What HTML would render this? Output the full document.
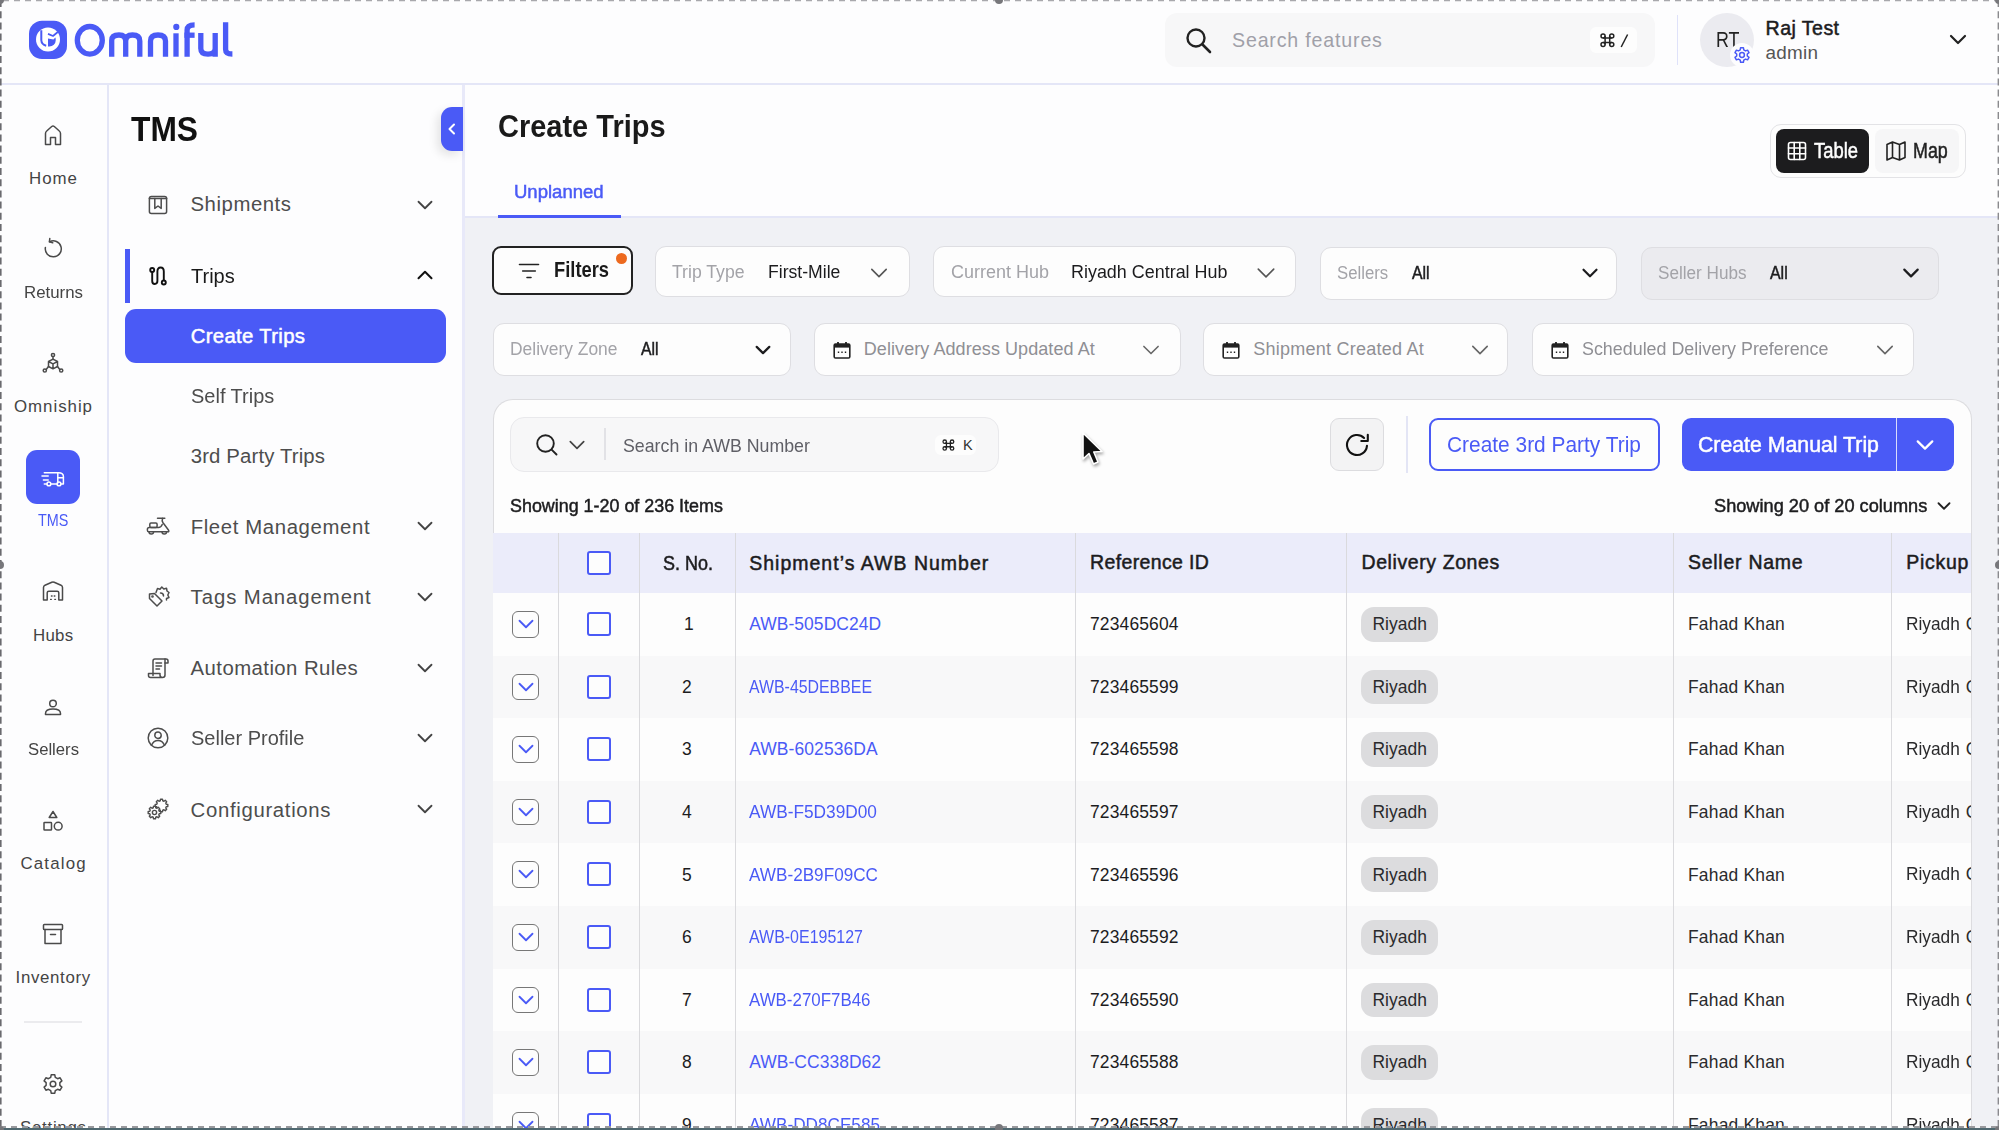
<!DOCTYPE html><html><head><meta charset="utf-8"><style>
html,body{margin:0;padding:0;width:1999px;height:1130px;overflow:hidden;background:#fdfdfe;font-family:"Liberation Sans",sans-serif}
.t{position:absolute;white-space:nowrap;line-height:1}
.r{position:absolute;box-sizing:border-box}
</style></head><body>
<div class="r" style="left:0px;top:0px;width:1999px;height:84px;background:#fdfdfe"></div>
<div class="r" style="left:0px;top:83px;width:1999px;height:2px;background:#e4e6f7"></div>
<div class="r" style="left:0px;top:85px;width:107px;height:1045px;background:#fdfdfe"></div>
<div class="r" style="left:107px;top:85px;width:2px;height:1045px;background:#e4e6f7"></div>
<div class="r" style="left:109px;top:85px;width:354px;height:1045px;background:#fdfdfe"></div>
<div class="r" style="left:462px;top:85px;width:3px;height:1045px;background:#e8e9f9"></div>
<div class="r" style="left:465px;top:85px;width:1534px;height:131px;background:#fdfdfe"></div>
<div class="r" style="left:465px;top:216px;width:1534px;height:2px;background:#e4e6f7"></div>
<div class="r" style="left:465px;top:218px;width:1534px;height:912px;background:#f0f1f5"></div>
<svg class="r" style="left:0;top:0" width="240" height="70" viewBox="0 0 240 70">
<rect x="29" y="20.7" width="38" height="38.3" rx="13" fill="#4a5af6"/>
<circle cx="48" cy="39.6" r="12" fill="#fff"/>
<path d="M41.3 30.3 V40.3 Q41.6 44.6 46.2 45.7" fill="none" stroke="#4a5af6" stroke-width="2"/>
<path d="M48 33.9 L53 36 L57.8 32" fill="none" stroke="#4a5af6" stroke-width="1.7" stroke-linejoin="round"/>
<path d="M48 38.6 L53.4 39.6 L55.4 37.4 Q55.9 38.8 55.7 40.4 A6.3 6.3 0 0 1 49.4 46.6 L48 46.5 Z" fill="#4a5af6"/>
<g fill="none" stroke="#4a5af6" stroke-width="5.3">
<ellipse cx="89.8" cy="40.3" rx="12.5" ry="13.8"/>
<path d="M111.7 56.7 V40.5 Q111.7 35 119 35 Q125.7 35 125.7 41 V56.7 M125.7 41 Q125.7 35 132.5 35 Q139.8 35 139.8 41 V56.7"/>
<path d="M150.5 56.7 V41 Q150.5 35 158 35 Q165.5 35 165.5 41 V56.7"/>
<path d="M176 33.3 V56.7"/>
<path d="M187.1 56.7 V30 Q187.1 24.8 194.6 24.8"/>
<path d="M184.4 35.2 H194.6"/>
<path d="M200.8 32.9 V48.5 Q200.8 54.2 208 54.2 Q215.2 54.2 215.2 48.5 V32.9 M215.2 48 V56.7"/>
<path d="M225.6 22.2 V49.5 Q225.6 54 232.4 54"/>
</g>
<circle cx="176.3" cy="26.9" r="3.1" fill="#4a5af6"/>
</svg>
<div class="r" style="left:1165px;top:12.6px;width:490px;height:54.800000000000004px;background:#f7f7f8;border-radius:12px"></div>
<svg class="r" style="left:1184px;top:26px;" width="30" height="28" viewBox="0 0 30 28"><circle cx="12" cy="12" r="8.5" fill="none" stroke="#222" stroke-width="2.4"/><path d="M18.5 18.5 L26 26" stroke="#222" stroke-width="2.6" stroke-linecap="round"/></svg>
<div class="t" style="left:1232.00px;top:31px;font-size:19.62px;letter-spacing:0.820px;color:#a0a0a8;font-weight:400;">Search features</div>
<div class="r" style="left:1590px;top:27px;width:47px;height:26px;background:#fdfdfd;border-radius:6px"></div>
<svg class="r" style="left:1600.5px;top:33.7px;overflow:visible" width="12.799999999999955" height="12.5" viewBox="0 0 12.799999999999955 12.5"><g fill="none" stroke="#222" stroke-width="1.5"><path d="M4.095999999999986 2.047999999999993 V10.452000000000007 M8.703999999999969 2.047999999999993 V10.452000000000007 M2.047999999999993 4.095999999999986 H10.751999999999962 M2.047999999999993 8.404000000000014 H10.751999999999962"/><circle cx="2.047999999999993" cy="2.047999999999993" r="2.047999999999993"/><circle cx="10.751999999999962" cy="2.047999999999993" r="2.047999999999993"/><circle cx="2.047999999999993" cy="10.452000000000007" r="2.047999999999993"/><circle cx="10.751999999999962" cy="10.452000000000007" r="2.047999999999993"/></g></svg>
<svg class="r" style="left:1618px;top:32px;" width="14" height="18" viewBox="0 0 14 18"><path d="M9.6 2.5 L3.2 15" stroke="#222" stroke-width="1.5" fill="none"/></svg>
<div class="r" style="left:1677px;top:15px;width:1.2999999999999545px;height:50px;background:#dfe2fa"></div>
<div class="r" style="left:1700px;top:13px;width:54px;height:54px;border-radius:50%;background:#ebebf0"></div>
<div class="t" style="left:1715.50px;top:29px;font-size:21.8px;letter-spacing:0.000px;color:#222;font-weight:400;transform:scaleX(0.8198);transform-origin:0 0;">RT</div>
<div class="r" style="left:1730px;top:43px;width:24px;height:24px;border-radius:50%;background:#fdfdfe"></div>
<svg class="r" style="left:1733px;top:46px;" width="18" height="18" viewBox="0 0 18 18"><g transform="translate(9,9)" fill="none" stroke="#4a5af6" stroke-width="1.5" stroke-linejoin="round"><circle r="2.4"/><path d="M-1.76,-5.11 L-1.41,-7.26 L1.41,-7.26 L1.76,-5.11 L3.54,-4.08 L5.58,-4.85 L7.00,-2.41 L5.30,-1.03 L5.30,1.03 L7.00,2.41 L5.58,4.85 L3.54,4.08 L1.76,5.11 L1.41,7.26 L-1.41,7.26 L-1.76,5.11 L-3.54,4.08 L-5.58,4.85 L-7.00,2.41 L-5.30,1.03 L-5.30,-1.03 L-7.00,-2.41 L-5.58,-4.85 L-3.54,-4.08 Z"/></g></svg>
<div class="t" style="left:1765.60px;top:19px;font-size:19.62px;letter-spacing:0.427px;color:#1c1c1e;font-weight:400;-webkit-text-stroke:0.5px #1c1c1e;">Raj Test</div>
<div class="t" style="left:1765.60px;top:44px;font-size:18.9px;letter-spacing:0.254px;color:#555;font-weight:400;">admin</div>
<svg class="r" style="left:1948px;top:33px;" width="20" height="14" viewBox="0 0 20 14"><path d="M3 3 L10 10 L17 3" fill="none" stroke="#222" stroke-width="2.2" stroke-linecap="round" stroke-linejoin="round"/></svg>
<svg class="r" style="left:41.0px;top:122.5px" width="24" height="24" viewBox="-12.0 -12.0 24 24"><g fill="none" stroke="#4a4a4a" stroke-width="1.5" stroke-linecap="round" stroke-linejoin="round"><path d="M-7.5 9.5 V-1.5 Q-7.5 -3 -6.3 -4 L-1.3 -8.5 Q0 -9.5 1.3 -8.5 L6.3 -4 Q7.5 -3 7.5 -1.5 V9.5 H2.5 V2.5 H-2.5 V9.5 Z"/></g></svg>
<svg class="r" style="left:41.0px;top:237.0px" width="24" height="24" viewBox="-12.0 -12.0 24 24"><g fill="none" stroke="#4a4a4a" stroke-width="1.5" stroke-linecap="round" stroke-linejoin="round"><path d="M-3.5 -7.2 A8 8 0 1 1 -7.6 -1.5"/><path d="M-3.2 -10.5 L-3.6 -7.2 L-0.3 -6.3"/></g></svg>
<svg class="r" style="left:41.0px;top:351.0px" width="24" height="24" viewBox="-12.0 -12.0 24 24"><g fill="none" stroke="#4a4a4a" stroke-width="1.5" stroke-linecap="round" stroke-linejoin="round"><circle cx="0" cy="-8" r="1.6"/><path d="M0 -6.4 V-3.6"/><path d="M-4.5 -1.5 L0 -3.8 L4.5 -1.5 V3.5 L0 5.8 L-4.5 3.5 Z M-4.5 -1.5 L0 0.8 L4.5 -1.5 M0 0.8 V5.8"/><circle cx="-8.2" cy="7.5" r="1.6"/><circle cx="8.2" cy="7.5" r="1.6"/><path d="M-4.5 3.5 L-6.8 6.5 M4.5 3.5 L6.8 6.5"/></g></svg>
<div class="r" style="left:26px;top:450px;width:54px;height:54px;background:#4a5af6;border-radius:11px"></div>
<svg class="r" style="left:40.0px;top:464.5px" width="26" height="26" viewBox="-13.0 -13.0 26 26"><g fill="none" stroke="#fff" stroke-width="1.5" stroke-linecap="round" stroke-linejoin="round"><path d="M-8.7 -5.3 H5.5 Q10.4 -5.3 10.4 -1.4 V5.9 H8 M4.1 5.9 H-2.2 M-6 5.9 H-8.7"/><path d="M4.8 -5.3 V5"/><path d="M4.8 -0.3 H10.4"/><circle cx="-4.1" cy="5.9" r="1.9"/><circle cx="6" cy="5.9" r="1.9"/><path d="M-11 -1.9 H-4.8 M-9.6 1.9 H-4.8"/></g></svg>
<svg class="r" style="left:41.0px;top:579.0px" width="24" height="24" viewBox="-12.0 -12.0 24 24"><g fill="none" stroke="#4a4a4a" stroke-width="1.5" stroke-linecap="round" stroke-linejoin="round"><path d="M-9.5 9 V-3.5 Q-9.5 -5 -8 -5.8 L-1.2 -8.8 Q0 -9.3 1.2 -8.8 L8 -5.8 Q9.5 -5 9.5 -3.5 V9 H5.8 V1.8 Q5.8 0.2 4.2 0.2 H-4.2 Q-5.8 0.2 -5.8 1.8 V9 Z"/><path d="M-1.6 5 H-0.9 M1.2 5 H1.9 M-2.4 8.4 H-1.7 M1.8 8.4 H2.5" stroke-width="1.3"/></g></svg>
<svg class="r" style="left:41.0px;top:694.5px" width="24" height="24" viewBox="-12.0 -12.0 24 24"><g fill="none" stroke="#4a4a4a" stroke-width="1.5" stroke-linecap="round" stroke-linejoin="round"><circle cx="0" cy="-3.5" r="3.3"/><path d="M-7.5 7.5 V6.5 Q-7.5 2 0 2 Q7.5 2 7.5 6.5 V7.5 Z"/></g></svg>
<svg class="r" style="left:41.0px;top:808.5px" width="24" height="24" viewBox="-12.0 -12.0 24 24"><g fill="none" stroke="#4a4a4a" stroke-width="1.5" stroke-linecap="round" stroke-linejoin="round"><path d="M0 -9.5 L3.8 -3.5 H-3.8 Z"/><rect x="-9" y="1.5" width="7.5" height="7.5" rx="0.6"/><circle cx="5.2" cy="5.2" r="3.9"/></g></svg>
<svg class="r" style="left:41.0px;top:922.0px" width="24" height="24" viewBox="-12.0 -12.0 24 24"><g fill="none" stroke="#4a4a4a" stroke-width="1.5" stroke-linecap="round" stroke-linejoin="round"><rect x="-9.5" y="-9.5" width="19" height="5" rx="0.8"/><path d="M-8 -4.5 V9.5 H8 V-4.5"/><path d="M-2.5 0.5 H2.5"/></g></svg>
<div class="r" style="left:24px;top:1021.3px;width:58px;height:1.5px;background:#ebebee"></div>
<svg class="r" style="left:41.0px;top:1072.0px" width="24" height="24" viewBox="-12.0 -12.0 24 24"><g fill="none" stroke="#4a4a4a" stroke-width="1.5" stroke-linecap="round" stroke-linejoin="round"><path d="M-2.28,-6.62 L-1.79,-9.23 L1.79,-9.23 L2.28,-6.62 L4.59,-5.28 L7.09,-6.17 L8.89,-3.06 L6.87,-1.34 L6.87,1.34 L8.89,3.06 L7.09,6.17 L4.59,5.28 L2.28,6.62 L1.79,9.23 L-1.79,9.23 L-2.28,6.62 L-4.59,5.28 L-7.09,6.17 L-8.89,3.06 L-6.87,1.34 L-6.87,-1.34 L-8.89,-3.06 L-7.09,-6.17 L-4.59,-5.28 Z"/><circle r="2.8"/></g></svg>
<div class="t" style="left:29.00px;top:171px;font-size:16.86px;letter-spacing:1.006px;color:#444;font-weight:400;">Home</div>
<div class="t" style="left:24.00px;top:285px;font-size:16.86px;letter-spacing:0.000px;color:#444;font-weight:400;transform:scaleX(0.9995);transform-origin:0 0;">Returns</div>
<div class="t" style="left:14.00px;top:399px;font-size:16.86px;letter-spacing:0.969px;color:#444;font-weight:400;">Omniship</div>
<div class="t" style="left:33.00px;top:628px;font-size:16.86px;letter-spacing:0.283px;color:#444;font-weight:400;">Hubs</div>
<div class="t" style="left:27.60px;top:742px;font-size:16.86px;letter-spacing:0.000px;color:#444;font-weight:400;transform:scaleX(0.9895);transform-origin:0 0;">Sellers</div>
<div class="t" style="left:20.40px;top:856px;font-size:16.86px;letter-spacing:1.197px;color:#444;font-weight:400;">Catalog</div>
<div class="t" style="left:15.60px;top:970px;font-size:16.86px;letter-spacing:0.657px;color:#444;font-weight:400;">Inventory</div>
<div class="t" style="left:20.00px;top:1120px;font-size:16.86px;letter-spacing:0.726px;color:#444;font-weight:400;">Settings</div>
<div class="t" style="left:37.70px;top:513px;font-size:15.7px;letter-spacing:0.000px;color:#4a5af6;font-weight:400;transform:scaleX(0.9172);transform-origin:0 0;">TMS</div>
<div class="t" style="left:131.00px;top:112px;font-size:34.88px;letter-spacing:0.000px;color:#111;font-weight:700;transform:scaleX(0.9099);transform-origin:0 0;">TMS</div>
<div class="r" style="left:441px;top:107px;width:22px;height:44px;background:#4a5af6;border-radius:11px 0 0 11px;box-shadow:-4px 4px 10px rgba(0,0,0,0.10)"></div>
<svg class="r" style="left:445px;top:120px;" width="14" height="18" viewBox="0 0 14 18"><path d="M9 4.5 L4.5 9 L9 13.5" fill="none" stroke="#fff" stroke-width="2" stroke-linecap="round" stroke-linejoin="round"/></svg>
<svg class="r" style="left:145.8px;top:193.2px" width="24" height="24" viewBox="-12.0 -12.0 24 24"><g fill="none" stroke="#4d4d4d" stroke-width="1.5" stroke-linecap="round" stroke-linejoin="round"><rect x="-8.6" y="-8.6" width="17.2" height="17.2" rx="2"/><path d="M-8.6 -6.6 H8.6"/><path d="M-3.2 -6.6 V3.4 L0 1 L3.2 3.4 V-6.6"/></g></svg>
<div class="t" style="left:190.50px;top:194px;font-size:20.35px;letter-spacing:0.543px;color:#4d4d4d;font-weight:400;">Shipments</div>
<svg class="r" style="left:412.5px;top:193px" width="24" height="24" viewBox="-12 -12 24 24"><path d="M-6.5 -3.25 L0 3.25 L6.5 -3.25" fill="none" stroke="#444" stroke-width="1.8" stroke-linecap="round" stroke-linejoin="round"/></svg>
<div class="r" style="left:125px;top:249px;width:5px;height:54px;background:#4a5af6"></div>
<svg class="r" style="left:145.8px;top:263.8px" width="24" height="24" viewBox="-12.0 -12.0 24 24"><g fill="none" stroke="#111" stroke-width="1.9" stroke-linecap="round" stroke-linejoin="round"><circle cx="-5.8" cy="-6" r="2"/><path d="M-5.8 -4 V5 Q-5.8 8 -3.2 8 Q-0.6 8 -0.6 5 V-4.5 Q-0.6 -8.5 2.6 -8.5 Q5.8 -8.5 5.8 -4.5 V4"/><circle cx="5.8" cy="6.5" r="2"/></g></svg>
<div class="t" style="left:190.70px;top:266px;font-size:20.35px;letter-spacing:0.000px;color:#1a1a1a;font-weight:400;transform:scaleX(0.9850);transform-origin:0 0;">Trips</div>
<svg class="r" style="left:412.5px;top:263px" width="24" height="24" viewBox="-12 -12 24 24"><path d="M-6.5 3.25 L0 -3.25 L6.5 3.25" fill="none" stroke="#111" stroke-width="2" stroke-linecap="round" stroke-linejoin="round"/></svg>
<div class="r" style="left:125px;top:309px;width:321px;height:53.5px;background:#4a5af6;border-radius:11px"></div>
<div class="t" style="left:190.70px;top:326px;font-size:20.35px;letter-spacing:0.316px;color:#fff;font-weight:400;-webkit-text-stroke:0.5px #fff;">Create Trips</div>
<div class="t" style="left:190.70px;top:386px;font-size:20.35px;letter-spacing:0.000px;color:#4d4d4d;font-weight:400;transform:scaleX(0.9821);transform-origin:0 0;">Self Trips</div>
<div class="t" style="left:190.70px;top:446px;font-size:20.35px;letter-spacing:0.142px;color:#4d4d4d;font-weight:400;">3rd Party Trips</div>
<svg class="r" style="left:145.5px;top:514.0px" width="24" height="24" viewBox="-12.0 -12.0 24 24"><g fill="none" stroke="#4d4d4d" stroke-width="1.5" stroke-linecap="round" stroke-linejoin="round"><path d="M-0.5 -7.7 H6.8"/><path d="M4.6 -7.6 Q3.6 -5.2 5 -3.2 Q7.6 0.2 10.6 4.2 Q11.2 5.8 10 5.8 H-9 Q-10.6 5.8 -10.6 4.2 V3.2 Q-10.6 1.5 -8.8 1.5 H0.5 Q3 1.5 4.2 -1.5"/><rect x="-8.2" y="-2.9" width="7.3" height="4.4" rx="1.2"/><path d="M-9 5.8 A2.3 2.3 0 0 0 -4.4 5.8 M4 5.8 A2.3 2.3 0 0 0 8.6 5.8"/></g></svg>
<div class="t" style="left:190.70px;top:517px;font-size:20.35px;letter-spacing:0.615px;color:#4d4d4d;font-weight:400;">Fleet Management</div>
<svg class="r" style="left:412.5px;top:514px" width="24" height="24" viewBox="-12 -12 24 24"><path d="M-6.5 -3.25 L0 3.25 L6.5 -3.25" fill="none" stroke="#444" stroke-width="1.8" stroke-linecap="round" stroke-linejoin="round"/></svg>
<svg class="r" style="left:145.5px;top:584.8px" width="24" height="24" viewBox="-12.0 -12.0 24 24"><g fill="none" stroke="#4d4d4d" stroke-width="1.5" stroke-linecap="round" stroke-linejoin="round"><path d="M-8.5 -3 L-3.5 -3.5 L4 4 L-1 9 L-8.5 1.5 Z"/><circle cx="-5.5" cy="-0.5" r="0.6"/><path d="M-2 -4.5 L-0.5 -8.5 L2 -7.8 L3.8 -10 L5.8 -8 L8.5 -8.8 L9 -6 L11 -4.5 L9.8 -2 L11 0.5 L8.5 1.5 L8.5 3"/><path d="M2.5 -4 A3 3 0 0 1 5.5 -1"/></g></svg>
<div class="t" style="left:190.60px;top:587px;font-size:20.35px;letter-spacing:0.913px;color:#4d4d4d;font-weight:400;">Tags Management</div>
<svg class="r" style="left:412.5px;top:584.8px" width="24" height="24" viewBox="-12 -12 24 24"><path d="M-6.5 -3.25 L0 3.25 L6.5 -3.25" fill="none" stroke="#444" stroke-width="1.8" stroke-linecap="round" stroke-linejoin="round"/></svg>
<svg class="r" style="left:145.5px;top:655.5px" width="24" height="24" viewBox="-12.0 -12.0 24 24"><g fill="none" stroke="#4d4d4d" stroke-width="1.5" stroke-linecap="round" stroke-linejoin="round"><path d="M-5 7.5 V-7 Q-5 -9 -3 -9 H8 Q10 -9 10 -7 V-5 H7"/><path d="M7 -9 V7 Q7 9.5 4.5 9.5 H-7.5 Q-9.5 9.5 -9.5 7.5 V5.5 H2 V7 Q2 9.5 4.5 9.5"/><path d="M-2 -5 H3.5 M-2 -2 H3.5 M-2 1 H1.5"/></g></svg>
<div class="t" style="left:190.60px;top:658px;font-size:20.35px;letter-spacing:0.432px;color:#4d4d4d;font-weight:400;">Automation Rules</div>
<svg class="r" style="left:412.5px;top:655.5px" width="24" height="24" viewBox="-12 -12 24 24"><path d="M-6.5 -3.25 L0 3.25 L6.5 -3.25" fill="none" stroke="#444" stroke-width="1.8" stroke-linecap="round" stroke-linejoin="round"/></svg>
<svg class="r" style="left:145.7px;top:726.3px" width="24" height="24" viewBox="-12.0 -12.0 24 24"><g fill="none" stroke="#4d4d4d" stroke-width="1.5" stroke-linecap="round" stroke-linejoin="round"><circle r="9.8"/><circle cx="0" cy="-2.8" r="3.2"/><path d="M-6.5 7.2 Q-4.5 2.5 0 2.5 Q4.5 2.5 6.5 7.2"/></g></svg>
<div class="t" style="left:190.60px;top:728px;font-size:20.35px;letter-spacing:0.000px;color:#4d4d4d;font-weight:400;transform:scaleX(0.9830);transform-origin:0 0;">Seller Profile</div>
<svg class="r" style="left:412.5px;top:726.3px" width="24" height="24" viewBox="-12 -12 24 24"><path d="M-6.5 -3.25 L0 3.25 L6.5 -3.25" fill="none" stroke="#444" stroke-width="1.8" stroke-linecap="round" stroke-linejoin="round"/></svg>
<svg class="r" style="left:145.7px;top:797.3px" width="24" height="24" viewBox="-12.0 -12.0 24 24"><g fill="none" stroke="#4d4d4d" stroke-width="1.4" stroke-linecap="round" stroke-linejoin="round"><g transform="translate(3.5,-3.5)"><path d="M-1.27,-4.73 L-1.00,-6.32 L1.00,-6.32 L1.27,-4.73 L2.45,-4.24 L3.76,-5.18 L5.18,-3.76 L4.24,-2.45 L4.73,-1.27 L6.32,-1.00 L6.32,1.00 L4.73,1.27 L4.24,2.45 L5.18,3.76 L3.76,5.18 L2.45,4.24 L1.27,4.73 L1.00,6.32 L-1.00,6.32 L-1.27,4.73 L-2.45,4.24 L-3.76,5.18 L-5.18,3.76 L-4.24,2.45 L-4.73,1.27 L-6.32,1.00 L-6.32,-1.00 L-4.73,-1.27 L-4.24,-2.45 L-5.18,-3.76 L-3.76,-5.18 L-2.45,-4.24 Z"/></g><g transform="translate(-3.5,3.5)"><path d="M-1.27,-4.73 L-1.00,-6.32 L1.00,-6.32 L1.27,-4.73 L2.45,-4.24 L3.76,-5.18 L5.18,-3.76 L4.24,-2.45 L4.73,-1.27 L6.32,-1.00 L6.32,1.00 L4.73,1.27 L4.24,2.45 L5.18,3.76 L3.76,5.18 L2.45,4.24 L1.27,4.73 L1.00,6.32 L-1.00,6.32 L-1.27,4.73 L-2.45,4.24 L-3.76,5.18 L-5.18,3.76 L-4.24,2.45 L-4.73,1.27 L-6.32,1.00 L-6.32,-1.00 L-4.73,-1.27 L-4.24,-2.45 L-5.18,-3.76 L-3.76,-5.18 L-2.45,-4.24 Z" fill="#fdfdfe"/><circle r="2.1"/></g></g></svg>
<div class="t" style="left:190.60px;top:800px;font-size:20.35px;letter-spacing:0.668px;color:#4d4d4d;font-weight:400;">Configurations</div>
<svg class="r" style="left:412.5px;top:797px" width="24" height="24" viewBox="-12 -12 24 24"><path d="M-6.5 -3.25 L0 3.25 L6.5 -3.25" fill="none" stroke="#444" stroke-width="1.8" stroke-linecap="round" stroke-linejoin="round"/></svg>
<div class="t" style="left:498.00px;top:111px;font-size:30.52px;letter-spacing:0.000px;color:#1a1a1a;font-weight:700;transform:scaleX(0.9501);transform-origin:0 0;">Create Trips</div>
<div class="t" style="left:514.40px;top:183px;font-size:18.9px;letter-spacing:0.000px;color:#4a5af6;font-weight:400;transform:scaleX(0.9801);transform-origin:0 0;-webkit-text-stroke:0.5px #4a5af6;">Unplanned</div>
<div class="r" style="left:497.6px;top:214.6px;width:123.0px;height:3.200000000000017px;background:#4a5af6"></div>
<div class="r" style="left:1769.5px;top:124px;width:196.0px;height:53.5px;background:#fdfdfd;border:1px solid #e3e3e6;border-radius:11px"></div>
<div class="r" style="left:1775.5px;top:129.2px;width:93.20000000000005px;height:43.5px;background:#1c1c1e;border-radius:8px"></div>
<div class="r" style="left:1874.7px;top:129.2px;width:84.70000000000005px;height:43.5px;background:#f6f6f7;border-radius:8px"></div>
<svg class="r" style="left:1785.0px;top:139.0px" width="24" height="24" viewBox="-12.0 -12.0 24 24"><g fill="none" stroke="#fff" stroke-width="1.6" stroke-linecap="round" stroke-linejoin="round"><rect x="-8.5" y="-8.5" width="17" height="17" rx="2"/><path d="M-8.5 -3 H8.5 M-8.5 2.7 H8.5 M-2.8 -8.5 V8.5 M2.8 -8.5 V8.5"/></g></svg>
<div class="t" style="left:1813.50px;top:141px;font-size:21.51px;letter-spacing:0.000px;color:#fff;font-weight:400;transform:scaleX(0.8555);transform-origin:0 0;-webkit-text-stroke:0.5px #fff;">Table</div>
<svg class="r" style="left:1884.0px;top:139.0px" width="24" height="24" viewBox="-12.0 -12.0 24 24"><g fill="none" stroke="#222" stroke-width="1.6" stroke-linecap="round" stroke-linejoin="round"><path d="M-9 -6.5 L-3.5 -9 L3.5 -6.5 L9 -9 V6.5 L3.5 9 L-3.5 6.5 L-9 9 Z M-3.5 -9 V6.5 M3.5 -6.5 V9"/></g></svg>
<div class="t" style="left:1913.40px;top:141px;font-size:21.51px;letter-spacing:0.000px;color:#222;font-weight:400;transform:scaleX(0.8318);transform-origin:0 0;-webkit-text-stroke:0.5px #222;">Map</div>
<div class="r" style="left:492.4px;top:246px;width:140.20000000000005px;height:48.60000000000002px;background:#fdfdfd;border:2px solid #222;border-radius:9px"></div>
<svg class="r" style="left:517.0px;top:258.5px" width="24" height="24" viewBox="-12.0 -12.0 24 24"><g fill="none" stroke="#222" stroke-width="1.6" stroke-linecap="round" stroke-linejoin="round"><path d="M-9.5 -6.5 H9.5 M-6.3 0 H6.3 M-2 6.5 H2"/></g></svg>
<div class="t" style="left:554.00px;top:259px;font-size:21.22px;letter-spacing:0.000px;color:#1a1a1a;font-weight:700;transform:scaleX(0.8637);transform-origin:0 0;">Filters</div>
<div class="r" style="left:615.5px;top:253px;width:11px;height:11px;border-radius:50%;background:#ed6a1f"></div>
<div class="r" style="left:655px;top:246.4px;width:254.5px;height:50.79999999999998px;background:#fdfdfd;border:1.3px solid #dedee2;border-radius:11px"></div>
<div class="t" style="left:672.40px;top:263px;font-size:18.02px;letter-spacing:0.000px;color:#a3a3a8;font-weight:400;transform:scaleX(0.9795);transform-origin:0 0;">Trip Type</div>
<div class="t" style="left:767.60px;top:263px;font-size:18.02px;letter-spacing:0.000px;color:#1c1c1e;font-weight:400;transform:scaleX(0.9776);transform-origin:0 0;">First-Mile</div>
<svg class="r" style="left:867.2px;top:260.5px" width="24" height="24" viewBox="-12 -12 24 24"><path d="M-7.2 -3.6 L0 3.6 L7.2 -3.6" fill="none" stroke="#555" stroke-width="1.6" stroke-linecap="round" stroke-linejoin="round"/></svg>
<div class="r" style="left:932.7px;top:246.3px;width:363.79999999999995px;height:50.89999999999998px;background:#fdfdfd;border:1.3px solid #dedee2;border-radius:11px"></div>
<div class="t" style="left:950.50px;top:263px;font-size:18.02px;letter-spacing:0.000px;color:#a3a3a8;font-weight:400;transform:scaleX(0.9984);transform-origin:0 0;">Current Hub</div>
<div class="t" style="left:1070.80px;top:263px;font-size:18.02px;letter-spacing:0.000px;color:#1c1c1e;font-weight:400;transform:scaleX(0.9952);transform-origin:0 0;">Riyadh Central Hub</div>
<svg class="r" style="left:1253.7px;top:260.5px" width="24" height="24" viewBox="-12 -12 24 24"><path d="M-7.7 -3.85 L0 3.85 L7.7 -3.85" fill="none" stroke="#555" stroke-width="1.6" stroke-linecap="round" stroke-linejoin="round"/></svg>
<div class="r" style="left:1319.6px;top:246.8px;width:297.8000000000002px;height:53.19999999999999px;background:#fdfdfd;border:1.3px solid #dedee2;border-radius:11px"></div>
<div class="t" style="left:1337.20px;top:264px;font-size:18.02px;letter-spacing:0.000px;color:#a3a3a8;font-weight:400;transform:scaleX(0.9294);transform-origin:0 0;">Sellers</div>
<div class="t" style="left:1411.80px;top:264px;font-size:18.02px;letter-spacing:0.000px;color:#1c1c1e;font-weight:400;transform:scaleX(0.8791);transform-origin:0 0;-webkit-text-stroke:0.5px #1c1c1e;">All</div>
<svg class="r" style="left:1577.5px;top:261.3px" width="24" height="24" viewBox="-12 -12 24 24"><path d="M-6.5 -3.25 L0 3.25 L6.5 -3.25" fill="none" stroke="#1c1c1e" stroke-width="2.2" stroke-linecap="round" stroke-linejoin="round"/></svg>
<div class="r" style="left:1640.8px;top:246.8px;width:297.79999999999995px;height:53.19999999999999px;background:#ebebef;border:1.3px solid #dedee2;border-radius:11px"></div>
<div class="t" style="left:1658.40px;top:264px;font-size:18.02px;letter-spacing:0.000px;color:#a3a3a8;font-weight:400;transform:scaleX(0.9512);transform-origin:0 0;">Seller Hubs</div>
<div class="t" style="left:1770.00px;top:264px;font-size:18.02px;letter-spacing:0.000px;color:#1c1c1e;font-weight:400;transform:scaleX(0.8841);transform-origin:0 0;-webkit-text-stroke:0.5px #1c1c1e;">All</div>
<svg class="r" style="left:1898.7px;top:261.3px" width="24" height="24" viewBox="-12 -12 24 24"><path d="M-6.7 -3.35 L0 3.35 L6.7 -3.35" fill="none" stroke="#1c1c1e" stroke-width="2.2" stroke-linecap="round" stroke-linejoin="round"/></svg>
<div class="r" style="left:492.6px;top:322.6px;width:298.0px;height:53.69999999999999px;background:#fdfdfd;border:1.3px solid #dedee2;border-radius:11px"></div>
<div class="t" style="left:510.30px;top:340px;font-size:18.02px;letter-spacing:0.000px;color:#a3a3a8;font-weight:400;transform:scaleX(0.9670);transform-origin:0 0;">Delivery Zone</div>
<div class="t" style="left:640.80px;top:340px;font-size:18.02px;letter-spacing:0.000px;color:#1c1c1e;font-weight:400;transform:scaleX(0.8741);transform-origin:0 0;-webkit-text-stroke:0.5px #1c1c1e;">All</div>
<svg class="r" style="left:750.7px;top:337.6px" width="24" height="24" viewBox="-12 -12 24 24"><path d="M-6.3 -3.15 L0 3.15 L6.3 -3.15" fill="none" stroke="#1c1c1e" stroke-width="2.2" stroke-linecap="round" stroke-linejoin="round"/></svg>
<div class="r" style="left:813.5px;top:323.2px;width:367.0px;height:52.80000000000001px;background:#fdfdfd;border:1.3px solid #dedee2;border-radius:11px"></div>
<svg class="r" style="left:832.5px;top:340.5px" width="18" height="18" viewBox="0 0 18 18"><rect x="1.2" y="3" width="15.6" height="14" rx="1.3" fill="none" stroke="#222" stroke-width="1.6"/><rect x="1.2" y="3" width="15.6" height="3.6" fill="#222"/><path d="M5 1 V3.5 M13 1 V3.5" stroke="#222" stroke-width="1.8"/><path d="M4.8 11.2 H6.2 M8.3 11.2 H9.7 M11.8 11.2 H13.2" stroke="#222" stroke-width="1.4"/></svg>
<div class="t" style="left:863.80px;top:340px;font-size:18.02px;letter-spacing:0.062px;color:#8f8f94;font-weight:400;">Delivery Address Updated At</div>
<svg class="r" style="left:1139px;top:338.4px" width="24" height="24" viewBox="-12 -12 24 24"><path d="M-7.1 -3.55 L0 3.55 L7.1 -3.55" fill="none" stroke="#666" stroke-width="1.6" stroke-linecap="round" stroke-linejoin="round"/></svg>
<div class="r" style="left:1203.3px;top:323px;width:305.20000000000005px;height:52.89999999999998px;background:#fdfdfd;border:1.3px solid #dedee2;border-radius:11px"></div>
<svg class="r" style="left:1222px;top:340.5px" width="18" height="18" viewBox="0 0 18 18"><rect x="1.2" y="3" width="15.6" height="14" rx="1.3" fill="none" stroke="#222" stroke-width="1.6"/><rect x="1.2" y="3" width="15.6" height="3.6" fill="#222"/><path d="M5 1 V3.5 M13 1 V3.5" stroke="#222" stroke-width="1.8"/><path d="M4.8 11.2 H6.2 M8.3 11.2 H9.7 M11.8 11.2 H13.2" stroke="#222" stroke-width="1.4"/></svg>
<div class="t" style="left:1253.20px;top:340px;font-size:18.02px;letter-spacing:0.240px;color:#8f8f94;font-weight:400;">Shipment Created At</div>
<svg class="r" style="left:1467.8px;top:338.4px" width="24" height="24" viewBox="-12 -12 24 24"><path d="M-7.2 -3.6 L0 3.6 L7.2 -3.6" fill="none" stroke="#666" stroke-width="1.6" stroke-linecap="round" stroke-linejoin="round"/></svg>
<div class="r" style="left:1531.6px;top:323px;width:382.60000000000014px;height:52.89999999999998px;background:#fdfdfd;border:1.3px solid #dedee2;border-radius:11px"></div>
<svg class="r" style="left:1551px;top:340.5px" width="18" height="18" viewBox="0 0 18 18"><rect x="1.2" y="3" width="15.6" height="14" rx="1.3" fill="none" stroke="#222" stroke-width="1.6"/><rect x="1.2" y="3" width="15.6" height="3.6" fill="#222"/><path d="M5 1 V3.5 M13 1 V3.5" stroke="#222" stroke-width="1.8"/><path d="M4.8 11.2 H6.2 M8.3 11.2 H9.7 M11.8 11.2 H13.2" stroke="#222" stroke-width="1.4"/></svg>
<div class="t" style="left:1582.20px;top:340px;font-size:18.02px;letter-spacing:0.000px;color:#8f8f94;font-weight:400;transform:scaleX(0.9923);transform-origin:0 0;">Scheduled Delivery Preference</div>
<svg class="r" style="left:1872.9px;top:338.4px" width="24" height="24" viewBox="-12 -12 24 24"><path d="M-7.2 -3.6 L0 3.6 L7.2 -3.6" fill="none" stroke="#666" stroke-width="1.6" stroke-linecap="round" stroke-linejoin="round"/></svg>
<div class="r" style="left:492.6px;top:398.8px;width:1479.0px;height:736.2px;background:#fdfdfd;border-radius:20px 20px 0 0;border:1.5px solid #dcdcdf;border-bottom:none"></div>
<div class="r" style="left:510.4px;top:416.6px;width:488.6px;height:55.89999999999998px;background:#f7f7f8;border:1px solid #e9e9ec;border-radius:14px"></div>
<svg class="r" style="left:533.8px;top:432.0px" width="26" height="26" viewBox="-13.0 -13.0 26 26"><g fill="none" stroke="#222" stroke-width="1.9" stroke-linecap="round" stroke-linejoin="round"><circle cx="-1.5" cy="-1.5" r="8.3"/><path d="M4.6 4.6 L9.5 9.5"/></g></svg>
<svg class="r" style="left:564.7px;top:432.8px" width="24" height="24" viewBox="-12 -12 24 24"><path d="M-6.7 -3.35 L0 3.35 L6.7 -3.35" fill="none" stroke="#444" stroke-width="1.7" stroke-linecap="round" stroke-linejoin="round"/></svg>
<div class="r" style="left:604px;top:428px;width:2px;height:32.30000000000001px;background:#e2e2e6"></div>
<div class="t" style="left:623.00px;top:437px;font-size:18.31px;letter-spacing:0.000px;color:#5f5f66;font-weight:400;transform:scaleX(0.9705);transform-origin:0 0;">Search in AWB Number</div>
<div class="r" style="left:935.4px;top:434.6px;width:40.200000000000045px;height:20.19999999999999px;background:#fdfdfd;border-radius:6px"></div>
<svg class="r" style="left:943.4px;top:439.8px;overflow:visible" width="10.800000000000068" height="10.199999999999989" viewBox="0 0 10.800000000000068 10.199999999999989"><g fill="none" stroke="#222" stroke-width="1.3"><path d="M3.4560000000000217 1.7280000000000109 V8.471999999999978 M7.3440000000000465 1.7280000000000109 V8.471999999999978 M1.7280000000000109 3.4560000000000217 H9.072000000000058 M1.7280000000000109 6.743999999999967 H9.072000000000058"/><circle cx="1.7280000000000109" cy="1.7280000000000109" r="1.7280000000000109"/><circle cx="9.072000000000058" cy="1.7280000000000109" r="1.7280000000000109"/><circle cx="1.7280000000000109" cy="8.471999999999978" r="1.7280000000000109"/><circle cx="9.072000000000058" cy="8.471999999999978" r="1.7280000000000109"/></g></svg>
<div class="t" style="left:963.00px;top:438px;font-size:14.53px;letter-spacing:0.000px;color:#333;font-weight:400;">K</div>
<svg class="r" style="left:1078px;top:428px" width="34" height="46" viewBox="0 0 34 46"><path d="M5 5 L5 31 L11 25.5 L15.5 36 L20 34 L15.8 24 L24 23.5 Z" fill="#111" stroke="#fff" stroke-width="1.6" stroke-linejoin="round" style="filter:drop-shadow(1px 2px 1.5px rgba(0,0,0,.35))"/></svg>
<div class="r" style="left:1330px;top:417.7px;width:54px;height:53.69999999999999px;background:#f3f3f4;border:1px solid #dcdcdf;border-radius:9px"></div>
<svg class="r" style="left:1343.0px;top:430.5px" width="28" height="28" viewBox="-14.0 -14.0 28 28"><g fill="none" stroke="#111" stroke-width="2.1" stroke-linecap="round" stroke-linejoin="round"><path d="M9.96 0.87 A10 10 0 1 1 7.07 -7.07"/><path d="M10.8 -10.3 V-4 H4.3"/></g></svg>
<div class="r" style="left:1406px;top:416px;width:2px;height:57px;background:#e3e5f5"></div>
<div class="r" style="left:1429px;top:417.7px;width:230.5px;height:53.69999999999999px;background:#fdfdfd;border:2px solid #4a5af6;border-radius:9px"></div>
<div class="t" style="left:1447.00px;top:434px;font-size:22.24px;letter-spacing:0.000px;color:#4a5af6;font-weight:400;transform:scaleX(0.9399);transform-origin:0 0;">Create 3rd Party Trip</div>
<div class="r" style="left:1681.6px;top:417.7px;width:272.10000000000014px;height:53.69999999999999px;background:#4a5af6;border-radius:9px"></div>
<div class="r" style="left:1895.5px;top:417.7px;width:1.5px;height:53.69999999999999px;background:#d9dcfb"></div>
<div class="t" style="left:1698.00px;top:434px;font-size:22.24px;letter-spacing:0.000px;color:#fff;font-weight:400;transform:scaleX(0.9570);transform-origin:0 0;-webkit-text-stroke:0.5px #fff;">Create Manual Trip</div>
<svg class="r" style="left:1913.3px;top:433px" width="24" height="24" viewBox="-12 -12 24 24"><path d="M-7.3 -3.65 L0 3.65 L7.3 -3.65" fill="none" stroke="#fff" stroke-width="2.2" stroke-linecap="round" stroke-linejoin="round"/></svg>
<div class="t" style="left:510.40px;top:496px;font-size:19.19px;letter-spacing:0.000px;color:#1c1c1e;font-weight:400;transform:scaleX(0.9326);transform-origin:0 0;-webkit-text-stroke:0.5px #1c1c1e;">Showing 1-20 of 236 Items</div>
<div class="t" style="left:1714.30px;top:496px;font-size:19.19px;letter-spacing:0.000px;color:#1c1c1e;font-weight:400;transform:scaleX(0.9476);transform-origin:0 0;-webkit-text-stroke:0.5px #1c1c1e;">Showing 20 of 20 columns</div>
<svg class="r" style="left:1932.2px;top:493.8px" width="24" height="24" viewBox="-12 -12 24 24"><path d="M-5.5 -2.75 L0 2.75 L5.5 -2.75" fill="none" stroke="#222" stroke-width="1.8" stroke-linecap="round" stroke-linejoin="round"/></svg>
<div class="r" style="left:493px;top:533px;width:1478px;height:597px;overflow:hidden">
<div class="r" style="left:0px;top:0px;width:1478px;height:60px;background:#ebecfa"></div>
<div class="r" style="left:0px;top:60.0px;width:1478px;height:62.60000000000002px;background:#fdfdfd"></div>
<div class="r" style="left:0px;top:122.60000000000002px;width:1478px;height:62.60000000000002px;background:#f8f8f9"></div>
<div class="r" style="left:0px;top:185.20000000000005px;width:1478px;height:62.60000000000002px;background:#fdfdfd"></div>
<div class="r" style="left:0px;top:247.79999999999995px;width:1478px;height:62.60000000000002px;background:#f8f8f9"></div>
<div class="r" style="left:0px;top:310.4px;width:1478px;height:62.60000000000002px;background:#fdfdfd"></div>
<div class="r" style="left:0px;top:373.0px;width:1478px;height:62.60000000000002px;background:#f8f8f9"></div>
<div class="r" style="left:0px;top:435.6px;width:1478px;height:62.60000000000002px;background:#fdfdfd"></div>
<div class="r" style="left:0px;top:498.20000000000005px;width:1478px;height:62.59999999999991px;background:#f8f8f9"></div>
<div class="r" style="left:0px;top:560.8px;width:1478px;height:62.59999999999991px;background:#fdfdfd"></div>
<div class="r" style="left:64.5px;top:0px;width:1.2999999999999545px;height:597px;background:#dadadd"></div>
<div class="r" style="left:146px;top:0px;width:1.2999999999999545px;height:597px;background:#dadadd"></div>
<div class="r" style="left:241.5px;top:0px;width:1.2999999999999545px;height:597px;background:#dadadd"></div>
<div class="r" style="left:581.5px;top:0px;width:1.2999999999999545px;height:597px;background:#dadadd"></div>
<div class="r" style="left:853.2px;top:0px;width:1.2999999999999545px;height:597px;background:#dadadd"></div>
<div class="r" style="left:1180px;top:0px;width:1.2999999999999545px;height:597px;background:#dadadd"></div>
<div class="r" style="left:1397.5px;top:0px;width:1.2999999999999545px;height:597px;background:#dadadd"></div>
</div>
<div class="r" style="left:587px;top:551px;width:24px;height:24px;border:2.6px solid #4a5af6;border-radius:3px;background:#fdfdfd"></div>
<div class="t" style="left:662.60px;top:554px;font-size:19.48px;letter-spacing:0.000px;color:#1c1c1e;font-weight:400;transform:scaleX(0.9236);transform-origin:0 0;-webkit-text-stroke:0.5px #1c1c1e;">S. No.</div>
<div class="t" style="left:749.20px;top:554px;font-size:19.48px;letter-spacing:1.025px;color:#1c1c1e;font-weight:400;-webkit-text-stroke:0.5px #1c1c1e;">Shipment’s AWB Number</div>
<div class="t" style="left:1090.00px;top:553px;font-size:19.48px;letter-spacing:0.384px;color:#1c1c1e;font-weight:400;-webkit-text-stroke:0.5px #1c1c1e;">Reference ID</div>
<div class="t" style="left:1361.50px;top:553px;font-size:19.48px;letter-spacing:0.607px;color:#1c1c1e;font-weight:400;-webkit-text-stroke:0.5px #1c1c1e;">Delivery Zones</div>
<div class="t" style="left:1688.00px;top:553px;font-size:19.48px;letter-spacing:0.742px;color:#1c1c1e;font-weight:400;-webkit-text-stroke:0.5px #1c1c1e;">Seller Name</div>
<div class="r" style="left:1880px;top:540px;width:91px;height:50px;overflow:hidden">
<div class="t" style="left:26.20px;top:13px;font-size:19.48px;letter-spacing:0.748px;color:#1c1c1e;font-weight:400;-webkit-text-stroke:0.5px #1c1c1e;">Pickup</div>
</div>
<div class="r" style="left:512px;top:611.0px;width:27px;height:26.5px;border:1.4px solid #777;border-radius:6px;background:#fdfdfd"></div>
<svg class="r" style="left:513.5px;top:612.0px" width="24" height="24" viewBox="-12 -12 24 24"><path d="M-6.5 -3.25 L0 3.25 L6.5 -3.25" fill="none" stroke="#4a5af6" stroke-width="1.8" stroke-linecap="round" stroke-linejoin="round"/></svg>
<div class="r" style="left:587px;top:612.0px;width:24px;height:24.0px;border:2.6px solid #4a5af6;border-radius:3px;background:#fdfdfd"></div>
<div class="t" style="left:684.00px;top:616px;font-size:17.44px;letter-spacing:0.000px;color:#1c1c1e;font-weight:400;">1</div>
<div class="t" style="left:749.20px;top:616px;font-size:17.44px;letter-spacing:0.067px;color:#4a5af6;font-weight:400;">AWB-505DC24D</div>
<div class="t" style="left:1090.00px;top:616px;font-size:17.44px;letter-spacing:0.152px;color:#1c1c1e;font-weight:400;">723465604</div>
<div class="r" style="left:1361px;top:607.0px;width:77.40000000000009px;height:34.60000000000002px;background:#dcdcde;border-radius:13px"></div>
<div class="t" style="left:1372.40px;top:616px;font-size:17.44px;letter-spacing:0.062px;color:#2a2a2c;font-weight:400;">Riyadh</div>
<div class="t" style="left:1688.00px;top:616px;font-size:17.44px;letter-spacing:0.197px;color:#2a2a2c;font-weight:400;">Fahad Khan</div>
<div class="r" style="left:1880px;top:599.0px;width:91px;height:50px;overflow:hidden">
<div class="t" style="left:26.20px;top:17px;font-size:17.44px;letter-spacing:0.000px;color:#2a2a2c;font-weight:400;transform:scaleX(0.9910);transform-origin:0 0;">Riyadh</div>
<div class="t" style="left:85.70px;top:17px;font-size:17.44px;letter-spacing:0.000px;color:#2a2a2c;font-weight:400;">C</div>
</div>
<div class="r" style="left:512px;top:673.6px;width:27px;height:26.5px;border:1.4px solid #777;border-radius:6px;background:#fdfdfd"></div>
<svg class="r" style="left:513.5px;top:674.6px" width="24" height="24" viewBox="-12 -12 24 24"><path d="M-6.5 -3.25 L0 3.25 L6.5 -3.25" fill="none" stroke="#4a5af6" stroke-width="1.8" stroke-linecap="round" stroke-linejoin="round"/></svg>
<div class="r" style="left:587px;top:674.6px;width:24px;height:24.0px;border:2.6px solid #4a5af6;border-radius:3px;background:#fdfdfd"></div>
<div class="t" style="left:682.00px;top:679px;font-size:17.44px;letter-spacing:0.000px;color:#1c1c1e;font-weight:400;">2</div>
<div class="t" style="left:749.20px;top:679px;font-size:17.44px;letter-spacing:0.000px;color:#4a5af6;font-weight:400;transform:scaleX(0.9109);transform-origin:0 0;">AWB-45DEBBEE</div>
<div class="t" style="left:1090.00px;top:679px;font-size:17.44px;letter-spacing:0.152px;color:#1c1c1e;font-weight:400;">723465599</div>
<div class="r" style="left:1361px;top:669.6px;width:77.40000000000009px;height:34.60000000000002px;background:#dcdcde;border-radius:13px"></div>
<div class="t" style="left:1372.40px;top:679px;font-size:17.44px;letter-spacing:0.062px;color:#2a2a2c;font-weight:400;">Riyadh</div>
<div class="t" style="left:1688.00px;top:679px;font-size:17.44px;letter-spacing:0.197px;color:#2a2a2c;font-weight:400;">Fahad Khan</div>
<div class="r" style="left:1880px;top:661.6px;width:91px;height:50px;overflow:hidden">
<div class="t" style="left:26.20px;top:17px;font-size:17.44px;letter-spacing:0.000px;color:#2a2a2c;font-weight:400;transform:scaleX(0.9910);transform-origin:0 0;">Riyadh</div>
<div class="t" style="left:85.70px;top:17px;font-size:17.44px;letter-spacing:0.000px;color:#2a2a2c;font-weight:400;">C</div>
</div>
<div class="r" style="left:512px;top:736.2px;width:27px;height:26.5px;border:1.4px solid #777;border-radius:6px;background:#fdfdfd"></div>
<svg class="r" style="left:513.5px;top:737.2px" width="24" height="24" viewBox="-12 -12 24 24"><path d="M-6.5 -3.25 L0 3.25 L6.5 -3.25" fill="none" stroke="#4a5af6" stroke-width="1.8" stroke-linecap="round" stroke-linejoin="round"/></svg>
<div class="r" style="left:587px;top:737.2px;width:24px;height:24.0px;border:2.6px solid #4a5af6;border-radius:3px;background:#fdfdfd"></div>
<div class="t" style="left:682.00px;top:741px;font-size:17.44px;letter-spacing:0.000px;color:#1c1c1e;font-weight:400;">3</div>
<div class="t" style="left:749.20px;top:741px;font-size:17.44px;letter-spacing:0.108px;color:#4a5af6;font-weight:400;">AWB-602536DA</div>
<div class="t" style="left:1090.00px;top:741px;font-size:17.44px;letter-spacing:0.152px;color:#1c1c1e;font-weight:400;">723465598</div>
<div class="r" style="left:1361px;top:732.2px;width:77.40000000000009px;height:34.60000000000002px;background:#dcdcde;border-radius:13px"></div>
<div class="t" style="left:1372.40px;top:741px;font-size:17.44px;letter-spacing:0.062px;color:#2a2a2c;font-weight:400;">Riyadh</div>
<div class="t" style="left:1688.00px;top:741px;font-size:17.44px;letter-spacing:0.197px;color:#2a2a2c;font-weight:400;">Fahad Khan</div>
<div class="r" style="left:1880px;top:724.2px;width:91px;height:50px;overflow:hidden">
<div class="t" style="left:26.20px;top:17px;font-size:17.44px;letter-spacing:0.000px;color:#2a2a2c;font-weight:400;transform:scaleX(0.9910);transform-origin:0 0;">Riyadh</div>
<div class="t" style="left:85.70px;top:17px;font-size:17.44px;letter-spacing:0.000px;color:#2a2a2c;font-weight:400;">C</div>
</div>
<div class="r" style="left:512px;top:798.8px;width:27px;height:26.5px;border:1.4px solid #777;border-radius:6px;background:#fdfdfd"></div>
<svg class="r" style="left:513.5px;top:799.8px" width="24" height="24" viewBox="-12 -12 24 24"><path d="M-6.5 -3.25 L0 3.25 L6.5 -3.25" fill="none" stroke="#4a5af6" stroke-width="1.8" stroke-linecap="round" stroke-linejoin="round"/></svg>
<div class="r" style="left:587px;top:799.8px;width:24px;height:24.0px;border:2.6px solid #4a5af6;border-radius:3px;background:#fdfdfd"></div>
<div class="t" style="left:682.00px;top:804px;font-size:17.44px;letter-spacing:0.000px;color:#1c1c1e;font-weight:400;">4</div>
<div class="t" style="left:749.20px;top:804px;font-size:17.44px;letter-spacing:0.000px;color:#4a5af6;font-weight:400;transform:scaleX(0.9905);transform-origin:0 0;">AWB-F5D39D00</div>
<div class="t" style="left:1090.00px;top:804px;font-size:17.44px;letter-spacing:0.152px;color:#1c1c1e;font-weight:400;">723465597</div>
<div class="r" style="left:1361px;top:794.8px;width:77.40000000000009px;height:34.60000000000002px;background:#dcdcde;border-radius:13px"></div>
<div class="t" style="left:1372.40px;top:804px;font-size:17.44px;letter-spacing:0.062px;color:#2a2a2c;font-weight:400;">Riyadh</div>
<div class="t" style="left:1688.00px;top:804px;font-size:17.44px;letter-spacing:0.197px;color:#2a2a2c;font-weight:400;">Fahad Khan</div>
<div class="r" style="left:1880px;top:786.8px;width:91px;height:50px;overflow:hidden">
<div class="t" style="left:26.20px;top:17px;font-size:17.44px;letter-spacing:0.000px;color:#2a2a2c;font-weight:400;transform:scaleX(0.9910);transform-origin:0 0;">Riyadh</div>
<div class="t" style="left:85.70px;top:17px;font-size:17.44px;letter-spacing:0.000px;color:#2a2a2c;font-weight:400;">C</div>
</div>
<div class="r" style="left:512px;top:861.4px;width:27px;height:26.5px;border:1.4px solid #777;border-radius:6px;background:#fdfdfd"></div>
<svg class="r" style="left:513.5px;top:862.4px" width="24" height="24" viewBox="-12 -12 24 24"><path d="M-6.5 -3.25 L0 3.25 L6.5 -3.25" fill="none" stroke="#4a5af6" stroke-width="1.8" stroke-linecap="round" stroke-linejoin="round"/></svg>
<div class="r" style="left:587px;top:862.4px;width:24px;height:24.0px;border:2.6px solid #4a5af6;border-radius:3px;background:#fdfdfd"></div>
<div class="t" style="left:682.00px;top:867px;font-size:17.44px;letter-spacing:0.000px;color:#1c1c1e;font-weight:400;">5</div>
<div class="t" style="left:749.20px;top:867px;font-size:17.44px;letter-spacing:0.000px;color:#4a5af6;font-weight:400;transform:scaleX(0.9835);transform-origin:0 0;">AWB-2B9F09CC</div>
<div class="t" style="left:1090.00px;top:867px;font-size:17.44px;letter-spacing:0.152px;color:#1c1c1e;font-weight:400;">723465596</div>
<div class="r" style="left:1361px;top:857.4px;width:77.40000000000009px;height:34.60000000000002px;background:#dcdcde;border-radius:13px"></div>
<div class="t" style="left:1372.40px;top:867px;font-size:17.44px;letter-spacing:0.062px;color:#2a2a2c;font-weight:400;">Riyadh</div>
<div class="t" style="left:1688.00px;top:867px;font-size:17.44px;letter-spacing:0.197px;color:#2a2a2c;font-weight:400;">Fahad Khan</div>
<div class="r" style="left:1880px;top:849.4px;width:91px;height:50px;overflow:hidden">
<div class="t" style="left:26.20px;top:17px;font-size:17.44px;letter-spacing:0.000px;color:#2a2a2c;font-weight:400;transform:scaleX(0.9910);transform-origin:0 0;">Riyadh</div>
<div class="t" style="left:85.70px;top:17px;font-size:17.44px;letter-spacing:0.000px;color:#2a2a2c;font-weight:400;">C</div>
</div>
<div class="r" style="left:512px;top:924.0px;width:27px;height:26.5px;border:1.4px solid #777;border-radius:6px;background:#fdfdfd"></div>
<svg class="r" style="left:513.5px;top:925.0px" width="24" height="24" viewBox="-12 -12 24 24"><path d="M-6.5 -3.25 L0 3.25 L6.5 -3.25" fill="none" stroke="#4a5af6" stroke-width="1.8" stroke-linecap="round" stroke-linejoin="round"/></svg>
<div class="r" style="left:587px;top:925.0px;width:24px;height:24.0px;border:2.6px solid #4a5af6;border-radius:3px;background:#fdfdfd"></div>
<div class="t" style="left:682.00px;top:929px;font-size:17.44px;letter-spacing:0.000px;color:#1c1c1e;font-weight:400;">6</div>
<div class="t" style="left:749.20px;top:929px;font-size:17.44px;letter-spacing:0.000px;color:#4a5af6;font-weight:400;transform:scaleX(0.9163);transform-origin:0 0;">AWB-0E195127</div>
<div class="t" style="left:1090.00px;top:929px;font-size:17.44px;letter-spacing:0.152px;color:#1c1c1e;font-weight:400;">723465592</div>
<div class="r" style="left:1361px;top:920.0px;width:77.40000000000009px;height:34.60000000000002px;background:#dcdcde;border-radius:13px"></div>
<div class="t" style="left:1372.40px;top:929px;font-size:17.44px;letter-spacing:0.062px;color:#2a2a2c;font-weight:400;">Riyadh</div>
<div class="t" style="left:1688.00px;top:929px;font-size:17.44px;letter-spacing:0.197px;color:#2a2a2c;font-weight:400;">Fahad Khan</div>
<div class="r" style="left:1880px;top:912.0px;width:91px;height:50px;overflow:hidden">
<div class="t" style="left:26.20px;top:17px;font-size:17.44px;letter-spacing:0.000px;color:#2a2a2c;font-weight:400;transform:scaleX(0.9910);transform-origin:0 0;">Riyadh</div>
<div class="t" style="left:85.70px;top:17px;font-size:17.44px;letter-spacing:0.000px;color:#2a2a2c;font-weight:400;">C</div>
</div>
<div class="r" style="left:512px;top:986.6px;width:27px;height:26.5px;border:1.4px solid #777;border-radius:6px;background:#fdfdfd"></div>
<svg class="r" style="left:513.5px;top:987.6px" width="24" height="24" viewBox="-12 -12 24 24"><path d="M-6.5 -3.25 L0 3.25 L6.5 -3.25" fill="none" stroke="#4a5af6" stroke-width="1.8" stroke-linecap="round" stroke-linejoin="round"/></svg>
<div class="r" style="left:587px;top:987.6px;width:24px;height:24.0px;border:2.6px solid #4a5af6;border-radius:3px;background:#fdfdfd"></div>
<div class="t" style="left:682.00px;top:992px;font-size:17.44px;letter-spacing:0.000px;color:#1c1c1e;font-weight:400;">7</div>
<div class="t" style="left:749.20px;top:992px;font-size:17.44px;letter-spacing:0.000px;color:#4a5af6;font-weight:400;transform:scaleX(0.9691);transform-origin:0 0;">AWB-270F7B46</div>
<div class="t" style="left:1090.00px;top:992px;font-size:17.44px;letter-spacing:0.152px;color:#1c1c1e;font-weight:400;">723465590</div>
<div class="r" style="left:1361px;top:982.6px;width:77.40000000000009px;height:34.60000000000002px;background:#dcdcde;border-radius:13px"></div>
<div class="t" style="left:1372.40px;top:992px;font-size:17.44px;letter-spacing:0.062px;color:#2a2a2c;font-weight:400;">Riyadh</div>
<div class="t" style="left:1688.00px;top:992px;font-size:17.44px;letter-spacing:0.197px;color:#2a2a2c;font-weight:400;">Fahad Khan</div>
<div class="r" style="left:1880px;top:974.6px;width:91px;height:50px;overflow:hidden">
<div class="t" style="left:26.20px;top:17px;font-size:17.44px;letter-spacing:0.000px;color:#2a2a2c;font-weight:400;transform:scaleX(0.9910);transform-origin:0 0;">Riyadh</div>
<div class="t" style="left:85.70px;top:17px;font-size:17.44px;letter-spacing:0.000px;color:#2a2a2c;font-weight:400;">C</div>
</div>
<div class="r" style="left:512px;top:1049.2px;width:27px;height:26.5px;border:1.4px solid #777;border-radius:6px;background:#fdfdfd"></div>
<svg class="r" style="left:513.5px;top:1050.2px" width="24" height="24" viewBox="-12 -12 24 24"><path d="M-6.5 -3.25 L0 3.25 L6.5 -3.25" fill="none" stroke="#4a5af6" stroke-width="1.8" stroke-linecap="round" stroke-linejoin="round"/></svg>
<div class="r" style="left:587px;top:1050.2px;width:24px;height:24.0px;border:2.6px solid #4a5af6;border-radius:3px;background:#fdfdfd"></div>
<div class="t" style="left:682.00px;top:1054px;font-size:17.44px;letter-spacing:0.000px;color:#1c1c1e;font-weight:400;">8</div>
<div class="t" style="left:749.20px;top:1054px;font-size:17.44px;letter-spacing:0.067px;color:#4a5af6;font-weight:400;">AWB-CC338D62</div>
<div class="t" style="left:1090.00px;top:1054px;font-size:17.44px;letter-spacing:0.152px;color:#1c1c1e;font-weight:400;">723465588</div>
<div class="r" style="left:1361px;top:1045.2px;width:77.40000000000009px;height:34.59999999999991px;background:#dcdcde;border-radius:13px"></div>
<div class="t" style="left:1372.40px;top:1054px;font-size:17.44px;letter-spacing:0.062px;color:#2a2a2c;font-weight:400;">Riyadh</div>
<div class="t" style="left:1688.00px;top:1054px;font-size:17.44px;letter-spacing:0.197px;color:#2a2a2c;font-weight:400;">Fahad Khan</div>
<div class="r" style="left:1880px;top:1037.2px;width:91px;height:50px;overflow:hidden">
<div class="t" style="left:26.20px;top:17px;font-size:17.44px;letter-spacing:0.000px;color:#2a2a2c;font-weight:400;transform:scaleX(0.9910);transform-origin:0 0;">Riyadh</div>
<div class="t" style="left:85.70px;top:17px;font-size:17.44px;letter-spacing:0.000px;color:#2a2a2c;font-weight:400;">C</div>
</div>
<div class="r" style="left:512px;top:1111.8px;width:27px;height:26.5px;border:1.4px solid #777;border-radius:6px;background:#fdfdfd"></div>
<svg class="r" style="left:513.5px;top:1112.8px" width="24" height="24" viewBox="-12 -12 24 24"><path d="M-6.5 -3.25 L0 3.25 L6.5 -3.25" fill="none" stroke="#4a5af6" stroke-width="1.8" stroke-linecap="round" stroke-linejoin="round"/></svg>
<div class="r" style="left:587px;top:1112.8px;width:24px;height:24.0px;border:2.6px solid #4a5af6;border-radius:3px;background:#fdfdfd"></div>
<div class="t" style="left:682.00px;top:1117px;font-size:17.44px;letter-spacing:0.000px;color:#1c1c1e;font-weight:400;">9</div>
<div class="t" style="left:749.20px;top:1117px;font-size:17.44px;letter-spacing:0.000px;color:#4a5af6;font-weight:400;transform:scaleX(0.9842);transform-origin:0 0;">AWB-DD8CE585</div>
<div class="t" style="left:1090.00px;top:1117px;font-size:17.44px;letter-spacing:0.152px;color:#1c1c1e;font-weight:400;">723465587</div>
<div class="r" style="left:1361px;top:1107.8px;width:77.40000000000009px;height:34.59999999999991px;background:#dcdcde;border-radius:13px"></div>
<div class="t" style="left:1372.40px;top:1117px;font-size:17.44px;letter-spacing:0.062px;color:#2a2a2c;font-weight:400;">Riyadh</div>
<div class="t" style="left:1688.00px;top:1117px;font-size:17.44px;letter-spacing:0.197px;color:#2a2a2c;font-weight:400;">Fahad Khan</div>
<div class="r" style="left:1880px;top:1099.8px;width:91px;height:50px;overflow:hidden">
<div class="t" style="left:26.20px;top:17px;font-size:17.44px;letter-spacing:0.000px;color:#2a2a2c;font-weight:400;transform:scaleX(0.9910);transform-origin:0 0;">Riyadh</div>
<div class="t" style="left:85.70px;top:17px;font-size:17.44px;letter-spacing:0.000px;color:#2a2a2c;font-weight:400;">C</div>
</div>
<svg class="r" style="left:0;top:0" width="1999" height="1130" viewBox="0 0 1999 1130"><g fill="none" stroke-width="2"><path d="M0 0.6 H1999" stroke="#a8a8ac" stroke-width="1.3" stroke-dasharray="6 5" stroke-dashoffset="-3"/><path d="M0.8 0 V1130" stroke="#6a6a6e" stroke-width="1.6" stroke-dasharray="7 4.2"/><path d="M1998.3 0 V1130" stroke="#8a8a8e" stroke-width="1.4" stroke-dasharray="7 4.2"/><path d="M0 1127 H1999" stroke="#9a9a9e" stroke-dasharray="6 5"/></g><rect x="0" y="1128" width="1999" height="2" fill="#4f6870"/><g fill="#77777b"><circle cx="999" cy="0" r="4"/><circle cx="0" cy="565" r="4"/><circle cx="1999" cy="565" r="4"/><circle cx="999" cy="1128" r="4"/><circle cx="0" cy="0" r="4"/><circle cx="1999" cy="0" r="4"/><circle cx="0" cy="1130" r="4"/><circle cx="1999" cy="1130" r="4"/></g></svg>
</body></html>
